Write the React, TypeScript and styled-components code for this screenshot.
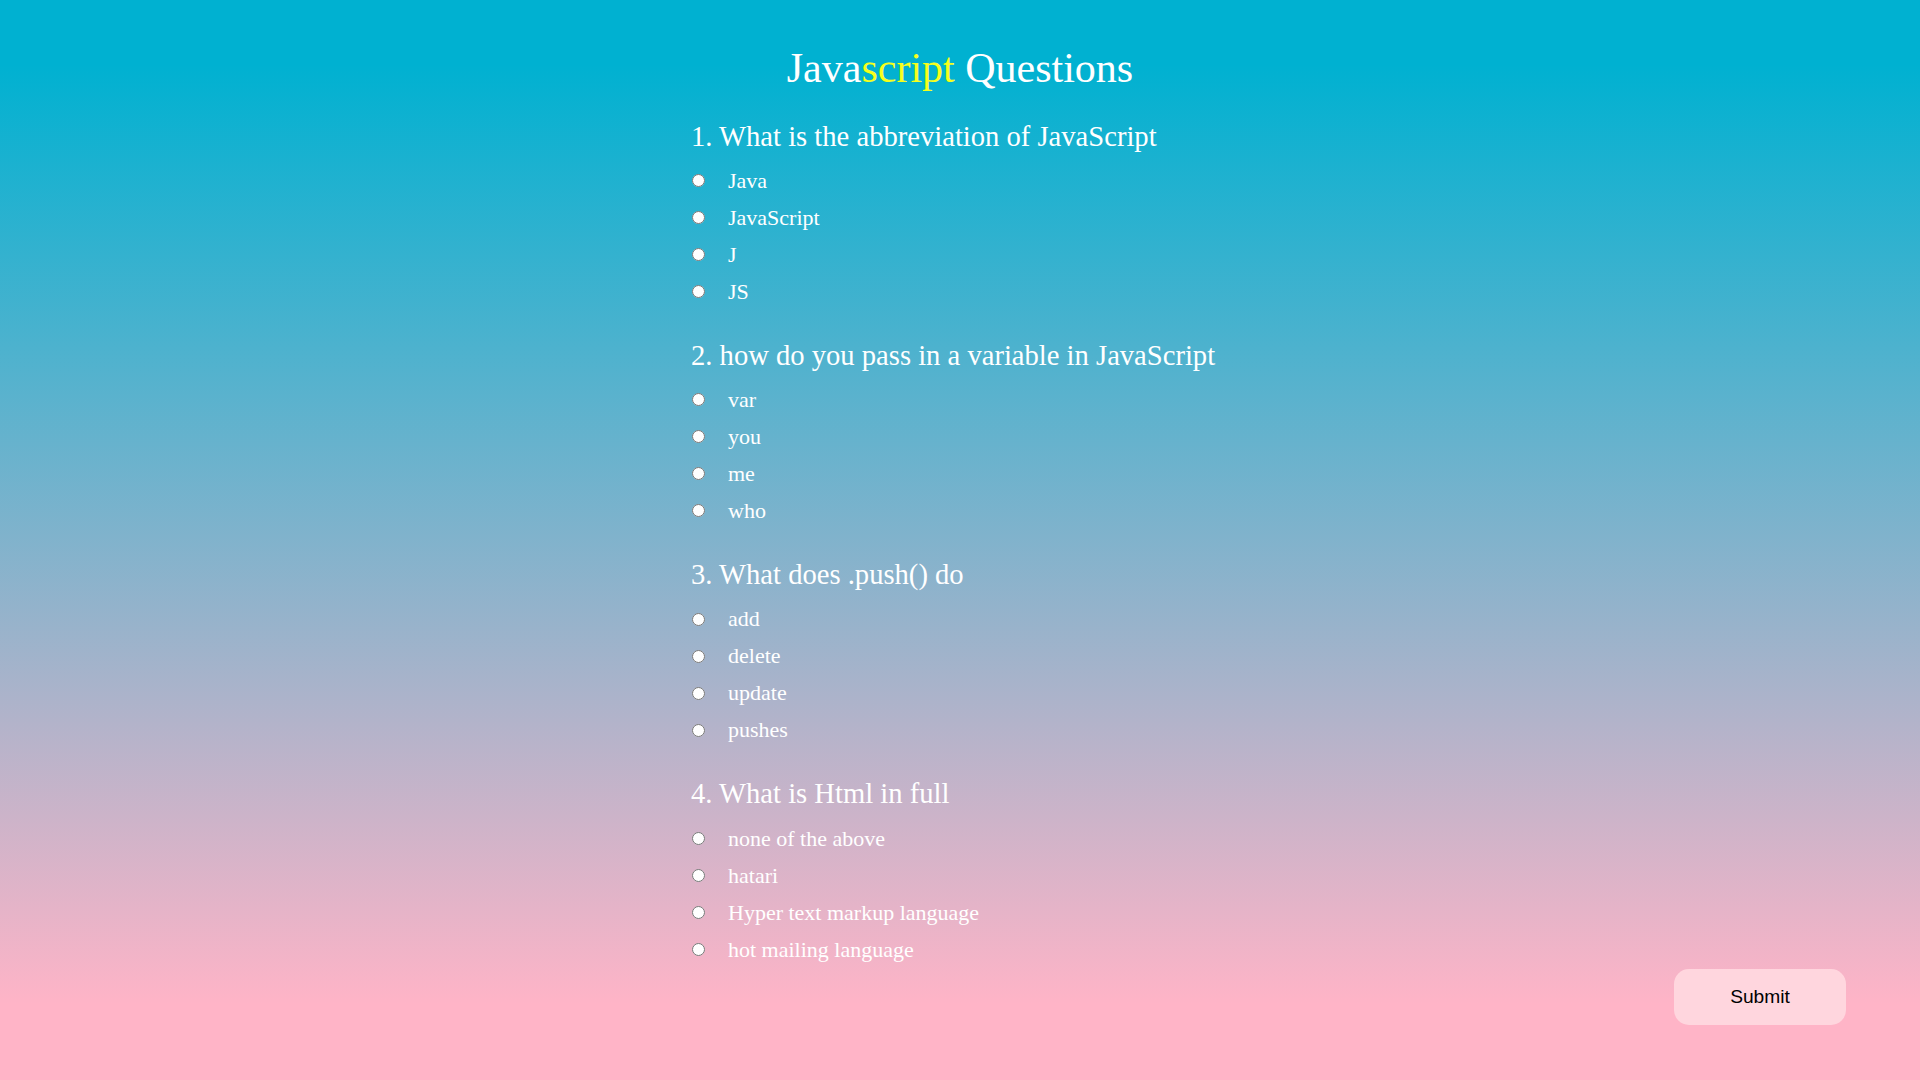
import React from "react";
import styled, { createGlobalStyle } from "styled-components";

const GlobalStyle = createGlobalStyle`
  html, body {
    margin: 0;
    padding: 0;
  }
  body {
    font-family: "Liberation Serif", "Times New Roman", serif;
  }
`;

const Page = styled.div`
  min-height: 100vh;
  box-sizing: border-box;
  padding-top: 44px;
  display: flex;
  flex-direction: column;
  background: linear-gradient(180deg, #00b1d1 6%, #ffb4c7 93%);
  color: #ffffff;
`;

const Quiz = styled.form`
  width: 538px;
  margin-left: calc(50% - 269px);
  display: flex;
  flex-direction: column;
`;

const Title = styled.h1`
  margin: 0 0 27.6px;
  font-size: 42px;
  line-height: 48px;
  font-weight: 400;
  text-align: center;
  white-space: nowrap;
`;

const Accent = styled.span`
  color: #f6ff1c;
`;

const Question = styled.section`
  display: flex;
  flex-direction: column;
  & + & {
    margin-top: 28.7px;
  }
`;

const Prompt = styled.h2`
  margin: 0 0 8.6px;
  font-size: 28.6px;
  line-height: 34px;
  font-weight: 400;
  white-space: nowrap;
`;

const Option = styled.label`
  display: flex;
  align-items: center;
  gap: 23px;
  height: 37px;
  font-size: 22px;
  white-space: nowrap;
`;

const Radio = styled.input`
  width: 13px;
  height: 13px;
  margin: 0 0 0 1px;
`;

const Footer = styled.div`
  display: flex;
  justify-content: flex-end;
  padding: 1px 74px 0 0;
`;

const SubmitButton = styled.button`
  width: 172px;
  height: 56px;
  border: none;
  border-radius: 15px;
  background: #ffd6de;
  color: #000000;
  font-family: "Liberation Sans", Arial, sans-serif;
  font-size: 19.2px;
  cursor: pointer;
`;

const questions = [
  {
    q: "1. What is the abbreviation of JavaScript",
    options: ["Java", "JavaScript", "J", "JS"],
  },
  {
    q: "2. how do you pass in a variable in JavaScript",
    options: ["var", "you", "me", "who"],
  },
  {
    q: "3. What does .push() do",
    options: ["add", "delete", "update", "pushes"],
  },
  {
    q: "4. What is Html in full",
    options: [
      "none of the above",
      "hatari",
      "Hyper text markup language",
      "hot mailing language",
    ],
  },
];

export default function App() {
  return (
    <>
      <GlobalStyle />
      <Page>
        <Quiz onSubmit={(e) => e.preventDefault()}>
          <Title>
            Java<Accent>script</Accent> Questions
          </Title>
          {questions.map((item, qi) => (
            <Question key={qi}>
              <Prompt>{item.q}</Prompt>
              {item.options.map((opt) => (
                <Option key={opt}>
                  <Radio type="radio" name={`q${qi}`} value={opt} />
                  {opt}
                </Option>
              ))}
            </Question>
          ))}
        </Quiz>
        <Footer>
          <SubmitButton type="button">Submit</SubmitButton>
        </Footer>
      </Page>
    </>
  );
}
